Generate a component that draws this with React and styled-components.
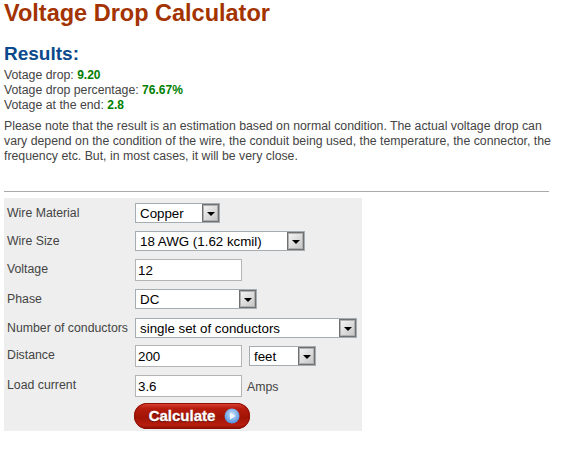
import React from 'react';
import styled, { createGlobalStyle } from 'styled-components';

const GlobalStyle = createGlobalStyle`
  html, body {
    margin: 0;
    padding: 0;
    background: #fff;
  }
  body {
    font-family: "Liberation Sans", Arial, sans-serif;
    font-size: 12.3px;
    line-height: 15px;
    color: #444;
  }
`;

// page
const Page = styled.div`
  width: 545px;
  padding: 0 0 0 4px;
`;

const Title = styled.h1`
  margin: 0;
  font-size: 23.5px;
  line-height: 26px;
  font-weight: bold;
  color: #a33300;
`;

const Heading = styled.h2`
  margin: 16px 0 0;
  font-size: 19px;
  line-height: 23px;
  font-weight: bold;
  color: #0a4a8c;
`;

const ResultList = styled.div`
  margin-top: 3px;
`;

const ResultLine = styled.div`
  height: 15px;
`;

const Value = styled.b`
  font-size: 12px;
  color: #008000;
`;

const Note = styled.p`
  width: 552px;
  margin: 6px 0 0;
`;

const Rule = styled.hr`
  margin: 27px 0 6px;
  border: 0;
  height: 1px;
  background: #aaa;
`;

// form
const Panel = styled.form`
  width: 358px;
  height: 233px;
  box-sizing: border-box;
  padding-top: 5px;
  background: #eee;
  display: flex;
  flex-direction: column;
`;

const Row = styled.div`
  height: ${(p) => p.$height}px;
  display: flex;
  align-items: flex-start;
`;

const Label = styled.label`
  width: 128px;
  padding-left: 3px;
  line-height: 21px;
  flex-shrink: 0;
`;

const Field = styled.div`
  display: flex;
  align-items: flex-start;
  gap: 7px;
`;

const SelectBox = styled.div`
  width: ${(p) => p.$width}px;
  height: 20px;
  box-sizing: border-box;
  border: 1px solid #a5acb2;
  background: #fff;
  display: flex;
  align-items: center;
  justify-content: space-between;
  padding-left: 4px;
  font-size: 13.33px;
  color: #000;
  margin-top: ${(p) => p.$top || 0}px;
`;

const Arrow = styled.span`
  width: 17px;
  height: 18px;
  box-sizing: border-box;
  border: 1px solid #707070;
  box-shadow: inset 0 0 0 1px #b0b0b0;
  background: linear-gradient(135deg, #f6f6f6, #c4c4c4);
  display: flex;
  align-items: center;
  justify-content: center;
  &::after {
    content: '';
    margin-top: 1px;
    border-left: 4px solid transparent;
    border-right: 4px solid transparent;
    border-top: 4px solid #000;
  }
`;

const TextBox = styled.input`
  width: 107px;
  height: 22px;
  box-sizing: border-box;
  border: 1px solid #b4b4b4;
  padding: 0 2px;
  margin: 0;
  font-family: "Liberation Sans", Arial, sans-serif;
  font-size: 13.33px;
  color: #000;
  background: #fff;
`;

const Unit = styled.span`
  line-height: 24px;
  margin-left: -2px;
`;

const Submit = styled.button`
  width: 116px;
  height: 26px;
  margin-left: 130px;
  padding: 0 0 1px 5px;
  box-sizing: border-box;
  border: 0;
  border-radius: 13px;
  background: linear-gradient(#e0493a 0, #b81c0d 20%, #a01405 55%, #b81e0e 85%, #7d0e02 100%);
  box-shadow: inset 0 0 0 1px #8c1206;
  display: flex;
  align-items: center;
  justify-content: center;
  gap: 9px;
  font-family: "Liberation Sans", Arial, sans-serif;
  font-size: 15px;
  font-weight: bold;
  color: #fff;
  -webkit-text-stroke: 0.3px #fff;
  text-shadow: 0 1px 1px #5a0a00;
`;

const Choice = ({ width, top, children }) => (
  <SelectBox $width={width} $top={top}>
    {children}
    <Arrow />
  </SelectBox>
);

const PlayIcon = () => (
  <svg width="16" height="16" viewBox="0 0 16 16">
    <defs>
      <radialGradient id="playBall" cx="50%" cy="40%" r="60%">
        <stop offset="0%" stopColor="#cfe4fb" />
        <stop offset="100%" stopColor="#4f8fdc" />
      </radialGradient>
    </defs>
    <circle cx="8" cy="8" r="7.5" fill="url(#playBall)" />
    <path d="M6 4.5 L11.5 8 L6 11.5 Z" fill="#f2f7fe" />
  </svg>
);

const App = () => (
  <Page>
    <GlobalStyle />
    <Title>Voltage Drop Calculator</Title>
    <Heading>Results:</Heading>
    <ResultList>
      <ResultLine>
        Votage drop: <Value>9.20</Value>
      </ResultLine>
      <ResultLine>
        Votage drop percentage: <Value>76.67%</Value>
      </ResultLine>
      <ResultLine>
        Votage at the end: <Value>2.8</Value>
      </ResultLine>
    </ResultList>
    <Note>
      Please note that the result is an estimation based on normal condition. The actual voltage drop can
      vary depend on the condition of the wire, the conduit being used, the temperature, the connector, the
      frequency etc. But, in most cases, it will be very close.
    </Note>
    <Rule />
    <Panel onSubmit={(e) => e.preventDefault()}>
      <Row $height={28}>
        <Label>Wire Material</Label>
        <Field>
          <Choice width={85}>Copper</Choice>
        </Field>
      </Row>
      <Row $height={28}>
        <Label>Wire Size</Label>
        <Field>
          <Choice width={170}>18 AWG (1.62 kcmil)</Choice>
        </Field>
      </Row>
      <Row $height={30}>
        <Label>Voltage</Label>
        <Field>
          <TextBox defaultValue="12" />
        </Field>
      </Row>
      <Row $height={29}>
        <Label>Phase</Label>
        <Field>
          <Choice width={122}>DC</Choice>
        </Field>
      </Row>
      <Row $height={27}>
        <Label>Number of conductors</Label>
        <Field>
          <Choice width={222}>single set of conductors</Choice>
        </Field>
      </Row>
      <Row $height={30}>
        <Label>Distance</Label>
        <Field>
          <TextBox defaultValue="200" />
          <Choice width={67} top={1}>feet</Choice>
        </Field>
      </Row>
      <Row $height={28}>
        <Label>Load current</Label>
        <Field>
          <TextBox defaultValue="3.6" />
          <Unit>Amps</Unit>
        </Field>
      </Row>
      <Submit type="submit">
        Calculate
        <PlayIcon />
      </Submit>
    </Panel>
  </Page>
);

export default App;
